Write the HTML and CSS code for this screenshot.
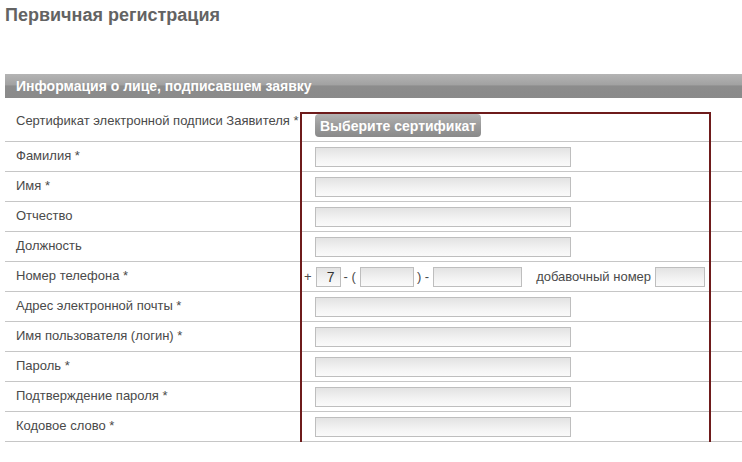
FILE: index.html
```html
<!DOCTYPE html>
<html>

<head lang="ru">
    <meta charset="UTF-8">
    <title>Первичная регистрация</title>
    <link rel="stylesheet" href="styles.css">
</head>

<body>

    <div class="wrap">
        <!--заголовок-->
        <h1 class="page-title">Первичная регистрация</h1>

        <!--блок формы-->
        <div class="section-title">Информация о лице, подписавшем заявку</div>

        <div class="rows">
            <div class="row row-first">
                <label class="lb">Сертификат электронной подписи Заявителя *</label>
                <div class="field">
                    <input type="button" class="btn-cert" value="Выберите сертификат">
                </div>
            </div>
            <div class="row">
                <label class="lb">Фамилия *</label>
                <div class="field"><input class="txt" type="text"></div>
            </div>
            <div class="row">
                <label class="lb">Имя *</label>
                <div class="field"><input class="txt" type="text"></div>
            </div>
            <div class="row">
                <label class="lb">Отчество</label>
                <div class="field"><input class="txt" type="text"></div>
            </div>
            <div class="row">
                <label class="lb">Должность</label>
                <div class="field"><input class="txt" type="text"></div>
            </div>
            <div class="row">
                <label class="lb">Номер телефона *</label>
                <div class="field field-phone">
                    <span class="plus">+</span>
                    <input class="txt txt-code" type="text" value="7">
                    <span class="sep">- (</span>
                    <input class="txt txt-area" type="text">
                    <span class="sep">) -</span>
                    <input class="txt txt-num" type="text">
                    <span class="ext">добавочный номер</span>
                    <input class="txt txt-ext" type="text">
                </div>
            </div>
            <div class="row">
                <label class="lb">Адрес электронной почты *</label>
                <div class="field"><input class="txt" type="text"></div>
            </div>
            <div class="row">
                <label class="lb">Имя пользователя (логин) *</label>
                <div class="field"><input class="txt" type="text"></div>
            </div>
            <div class="row">
                <label class="lb">Пароль *</label>
                <div class="field"><input class="txt" type="password"></div>
            </div>
            <div class="row">
                <label class="lb">Подтверждение пароля *</label>
                <div class="field"><input class="txt" type="password"></div>
            </div>
            <div class="row">
                <label class="lb">Кодовое слово *</label>
                <div class="field"><input class="txt" type="text"></div>
            </div>

            <!--выделение полей-->
            <div class="marker"></div>
        </div>
    </div>

</body>

</html>
```

FILE: styles.css
```css
* {
    padding: 0;
    margin: 0;
}

body {
    font-family: "Liberation Sans", Arial, sans-serif;
    color: #4a4a4a;
    background: #fff;
    overflow: hidden;
}

.wrap {
    padding-left: 5px;
}

.page-title {
    font-size: 18px;
    font-weight: bold;
    color: #636363;
    line-height: 22px;
    padding-top: 4px;
    height: 70px;
}

.section-title {
    height: 24px;
    line-height: 24px;
    padding-left: 11px;
    font-size: 14px;
    font-weight: bold;
    color: #fff;
    background: linear-gradient(#b4b4b4, #a2a2a2 45%, #8c8c8c 50%, #8a8a8a);
}

.rows {
    position: relative;
}

.row {
    display: flex;
    align-items: center;
    height: 29px;
    border-bottom: 1px solid #c6c6c6;
    font-size: 13px;
}

.row-first {
    height: 38px;
    padding-top: 5px;
    align-items: flex-start;
}

.row-first .lb {
    padding-top: 10px;
}

.lb {
    display: block;
    width: 284px;
    padding-left: 11px;
    padding-bottom: 2px;
}

.field {
    display: flex;
    align-items: center;
    padding-left: 15px;
    padding-top: 1px;
}

.row-first .field {
    padding-top: 11px;
}

.txt {
    box-sizing: border-box;
    width: 256px;
    height: 20px;
    border: 1px solid #bebebe;
    background: linear-gradient(#e3e3e3, #f3f3f3 60%, #fafafa);
    font: 14px "Liberation Sans", Arial, sans-serif;
    color: #333;
    outline: none;
}

.btn-cert {
    width: 166px;
    height: 23px;
    border: 0;
    border-radius: 4px;
    background: linear-gradient(#b3b3b3, #9b9b9b 50%, #8a8a8a);
    font: bold 14px "Liberation Sans", Arial, sans-serif;
    color: #fff;
    text-align: left;
    padding-left: 5px;
}

.field-phone {
    padding-left: 4px;
}

.field-phone span {
    padding-bottom: 2px;
}

.plus {
    margin-right: 4px;
}

.sep {
    margin: 0 4px 0 3px;
}

.txt-code {
    width: 25px;
    text-align: right;
    padding-right: 5px;
}

.txt-area {
    width: 54px;
}

.txt-num {
    width: 89px;
}

.field-phone .ext {
    margin: 0 4px 0 14px;
}

.txt-ext {
    width: 50px;
}

.marker {
    position: absolute;
    left: 295px;
    top: 14px;
    width: 407px;
    height: 336px;
    border: 2px solid #6e1b1b;
    pointer-events: none;
}
```
